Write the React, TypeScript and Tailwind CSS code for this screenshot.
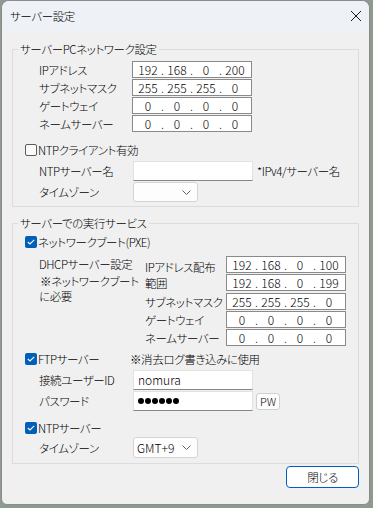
import { Fragment } from "react";

const jp = "font-['Noto_Sans_CJK_JP',sans-serif] [font-feature-settings:'palt'] font-light";
const txt = "text-[11.5px] tracking-[-0.4px] leading-[16px]";

function IpField({ parts }: { parts: string[] }) {
  return (
    <div className="flex h-[17px] w-[120px] shrink-0 items-center border border-[#8a8a8a] bg-white pl-[2px] text-[12px] leading-none">
      {parts.map((p, i) => (
        <Fragment key={i}>
          {i > 0 && <span className="w-[3px] text-center">.</span>}
          <span className="w-[26px] text-center">{p}</span>
        </Fragment>
      ))}
    </div>
  );
}

function TextBox({ value, dots }: { value?: string; dots?: boolean }) {
  return (
    <div className="flex h-[20px] w-[120px] shrink-0 items-center border border-[#e2e2e2] border-b-[#868686] bg-white px-[4px] text-[12px] leading-none">
      {dots ? (
        <span className="flex gap-[1px]">
          {[0, 1, 2, 3, 4, 5].map((i) => (
            <span key={i} className="h-[6px] w-[6px] rounded-full bg-black" />
          ))}
        </span>
      ) : (
        value
      )}
    </div>
  );
}

function Combo({ value, h = "h-[20px]" }: { value?: string; h?: string }) {
  return (
    <div className={`flex ${h} w-[65px] items-center justify-between rounded-[3px] border border-[#d4d4d4] bg-[#fdfdfd] pl-[3px] pr-[6px] text-[12px] leading-none`}>
      <span>{value}</span>
      <svg width="9" height="5" viewBox="0 0 9 5" fill="none">
        <path d="M0.5 0.5 L4.5 4.5 L8.5 0.5" stroke="#606060" strokeWidth="1" />
      </svg>
    </div>
  );
}

function Check({ checked, label, w }: { checked?: boolean; label: string; w?: string }) {
  return (
    <div className="flex h-[16px] items-center">
      {checked ? (
        <span className="flex h-[12px] w-[12px] items-center justify-center rounded-[2px] bg-[#005fb8]">
          <svg width="8" height="6" viewBox="0 0 8 6" fill="none">
            <path d="M0.8 3 L3 5 L7.2 0.8" stroke="white" strokeWidth="1.1" />
          </svg>
        </span>
      ) : (
        <span className="h-[12px] w-[12px] rounded-[2px] border border-[#5c5c5c] bg-[#fbfbfb]" />
      )}
      <span className={`ml-[1px] ${txt} ${w ?? ""}`}>{label}</span>
    </div>
  );
}

function Group({ title, children, className }: { title: string; children: React.ReactNode; className?: string }) {
  return (
    <fieldset className={`border border-[#dcdcdc] ${className ?? ""}`}>
      <legend className={`ml-[5px] px-[2px] ${txt}`}>{title}</legend>
      {children}
    </fieldset>
  );
}

export default function App() {
  return (
    <div className={`h-[508px] w-[373px] bg-[#8c9a90] ${jp} text-black`}>
      <div className="ml-[1px] flex h-[505px] w-[369px] flex-col overflow-hidden rounded-t-[8px] rounded-b-[6px] border border-[#8b8b8b] bg-[#f0f0f0]">
        <div className="flex h-[30px] items-center justify-between bg-[#eef2f7] pl-[8px] pr-[6px]">
          <span className={txt}>サーバー設定</span>
          <svg width="12" height="12" viewBox="0 0 12 12" className="mr-[1px]">
            <path d="M1 1 L11 11 M11 1 L1 11" stroke="#1a1a1a" strokeWidth="1" />
          </svg>
        </div>

        <div className="flex flex-col px-[10px]">
          <Group title="サーバーPCネットワーク設定" className="mt-[10px]">
            <div className="pb-[4px] pl-[12px] pt-[4px]">
              <div className="ml-[14px] flex flex-col gap-[1px]">
                {[
                  ["IPアドレス", ["192", "168", "0", "200"]],
                  ["サブネットマスク", ["255", "255", "255", "0"]],
                  ["ゲートウェイ", ["0", "0", "0", "0"]],
                  ["ネームサーバー", ["0", "0", "0", "0"]],
                ].map(([label, parts]) => (
                  <div key={label as string} className="flex items-center">
                    <span className={`w-[93px] ${txt}`}>{label as string}</span>
                    <IpField parts={parts as string[]} />
                  </div>
                ))}
              </div>
              <div className="mt-[10px]">
                <Check label="NTPクライアント有効" />
              </div>
              <div className="ml-[14px] mt-[3px] flex items-center">
                <span className={`w-[94px] ${txt}`}>NTPサーバー名</span>
                <TextBox />
                <span className={`ml-[4px] ${txt}`}>*IPv4/サーバー名</span>
              </div>
              <div className="ml-[14px] mt-[1px] flex items-center">
                <span className={`w-[94px] ${txt}`}>タイムゾーン</span>
                <Combo />
              </div>
            </div>
          </Group>

          <Group title="サーバーでの実行サービス" className="mt-[8px]">
            <div className="pb-[5px] pl-[12px] pt-[3px]">
              <Check checked label="ネットワークブート(PXE)" />
              <div className="ml-[14px] mt-[6px] flex">
                <div className={`w-[106px] shrink-0 whitespace-nowrap ${txt}`}>
                  <div>DHCPサーバー設定</div>
                  <div className="mt-[2px] leading-[15px]">
                    <span className="ml-[1px]">※ネットワークブート</span>
                    <br />
                    に必要
                  </div>
                </div>
                <div className="flex flex-col">
                  <div className="flex">
                    <div className={`w-[81px] shrink-0 whitespace-nowrap pt-[3px] ${txt}`}>
                      IPアドレス配布
                      <br />
                      範囲
                    </div>
                    <div className="flex flex-col gap-[1px]">
                      <IpField parts={["192", "168", "0", "100"]} />
                      <IpField parts={["192", "168", "0", "199"]} />
                    </div>
                  </div>
                  <div className="mt-[2px] flex flex-col gap-[1px]">
                    {[
                      ["サブネットマスク", ["255", "255", "255", "0"]],
                      ["ゲートウェイ", ["0", "0", "0", "0"]],
                      ["ネームサーバー", ["0", "0", "0", "0"]],
                    ].map(([label, parts]) => (
                      <div key={label as string} className="flex items-center">
                        <span className={`w-[81px] shrink-0 whitespace-nowrap ${txt}`}>{label as string}</span>
                        <IpField parts={parts as string[]} />
                      </div>
                    ))}
                  </div>
                </div>
              </div>

              <div className="mt-[5px] flex items-center">
                <Check checked label="FTPサーバー" w="w-[92px]" />
                <span className={txt}>※消去ログ書き込みに使用</span>
              </div>
              <div className="ml-[14px] mt-[3px] flex items-center">
                <span className={`w-[94px] ${txt}`}>接続ユーザーID</span>
                <TextBox value="nomura" />
              </div>
              <div className="ml-[14px] mt-[1px] flex items-center">
                <span className={`w-[94px] ${txt}`}>パスワード</span>
                <TextBox dots />
                <button className="ml-[3px] flex h-[17px] w-[24px] items-center justify-center rounded-[3px] border border-[#d0d0d0] bg-[#fdfdfd] text-[11px] leading-none">
                  PW
                </button>
              </div>
              <div className="mt-[9px]">
                <Check checked label="NTPサーバー" />
              </div>
              <div className="ml-[14px] mt-[1px] flex items-center">
                <span className={`w-[94px] ${txt}`}>タイムゾーン</span>
                <Combo value="GMT+9" h="h-[21px]" />
              </div>
            </div>
          </Group>

          <button className={`mt-[2px] flex h-[22px] w-[73px] items-center justify-center self-end rounded-[4px] border border-[#005fb8] bg-white ${txt}`}>
            閉じる
          </button>
        </div>
      </div>
    </div>
  );
}
